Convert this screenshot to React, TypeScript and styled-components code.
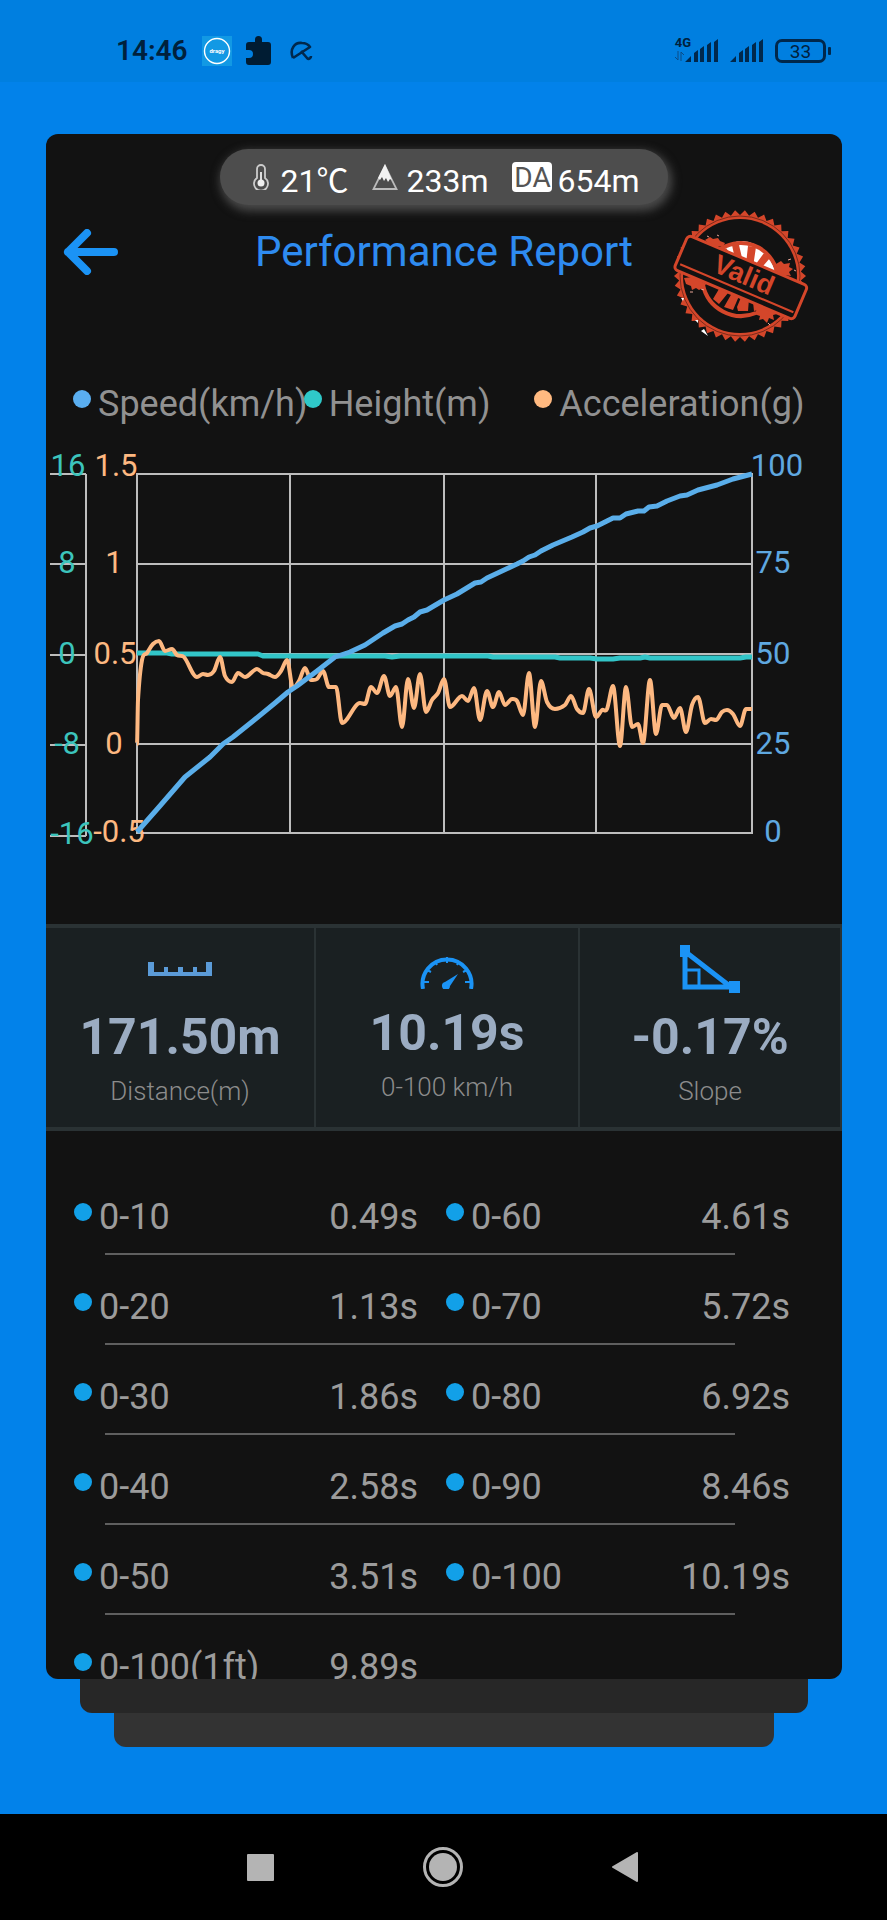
import React from 'react'
import styled, { createGlobalStyle } from 'styled-components'

type Point = [number, number]

const GlobalStyle = createGlobalStyle`
  * {
    box-sizing: border-box;
  }
  body {
    margin: 0;
    background: #0282ea;
    font-family: Roboto, 'Noto Sans CJK SC', sans-serif;
  }
`

const legend = [
  { label: 'Speed(km/h)', color: '#5aaef0' },
  { label: 'Height(m)', color: '#2fc8c8' },
  { label: 'Acceleration(g)', color: '#ffb980' },
]

const splits = [
  ['0-10', '0.49s', '0-60', '4.61s'],
  ['0-20', '1.13s', '0-70', '5.72s'],
  ['0-30', '1.86s', '0-80', '6.92s'],
  ['0-40', '2.58s', '0-90', '8.46s'],
  ['0-50', '3.51s', '0-100', '10.19s'],
  ['0-100(1ft)', '9.89s'],
]

const speed: Point[] = [
  [137, 832], [159, 807], [185, 777], [210, 757], [223, 744], [233, 737], [253, 721], [275, 703],
  [288, 692], [297, 686], [317, 671], [335, 657], [350, 652], [365, 645], [383, 633], [395, 626],
  [402, 624], [408, 620], [414, 617], [420, 612], [427, 610], [444, 600], [457, 594], [475, 583],
  [481, 582], [487, 578], [517, 564], [523, 561], [529, 557], [535, 555], [541, 551], [553, 545],
  [572, 537], [583, 532], [590, 528], [597, 526], [607, 521], [613, 518], [620, 518], [626, 514],
  [638, 511], [644, 511], [649, 507], [657, 506], [667, 501], [680, 496], [687, 495], [698, 490],
  [717, 485], [733, 479], [752, 474],
]

const height: Point[] = [
  [137, 653], [167, 653], [172, 654], [258, 654], [263, 656], [385, 656], [392, 657], [400, 656],
  [488, 656], [493, 657], [555, 657], [560, 658], [590, 658], [597, 659], [613, 659], [620, 658],
  [640, 658], [645, 657], [650, 658], [740, 658], [746, 657], [752, 657],
]

const acceleration: Point[] = [
  [137, 744], [138, 700], [142, 660], [147, 653], [153, 644], [159, 641], [165, 651], [172, 649],
  [177, 655], [184, 657], [197, 677], [203, 674], [208, 675], [214, 671], [220, 657], [225, 676],
  [232, 682], [238, 673], [245, 677], [257, 669], [263, 673], [268, 674], [275, 677], [281, 671],
  [287, 660], [293, 688], [299, 681], [305, 668], [311, 680], [317, 679], [323, 671], [329, 687],
  [336, 687], [342, 723], [360, 703], [365, 704], [371, 687], [377, 693], [384, 676], [390, 696],
  [396, 687], [402, 727], [408, 679], [414, 708], [420, 674], [426, 712], [432, 700], [438, 693],
  [444, 679], [450, 707], [462, 696], [468, 701], [474, 688], [480, 720], [487, 691], [493, 707],
  [499, 692], [505, 705], [512, 699], [517, 701], [523, 715], [529, 673], [535, 727], [541, 681],
  [547, 702], [555, 709], [565, 705], [571, 696], [577, 709], [583, 713], [589, 689], [596, 717],
  [602, 710], [607, 709], [613, 686], [620, 746], [626, 687], [632, 727], [638, 724], [643, 743],
  [650, 680], [656, 734], [662, 705], [667, 705], [674, 718], [680, 708], [686, 732], [692, 705],
  [698, 697], [705, 723], [711, 719], [716, 720], [722, 712], [727, 710], [733, 714], [740, 726],
  [746, 709], [752, 709],
]

const toLine = (points: Point[]) => points.map((p) => p.join(',')).join(' ')

// flat at every peak and dip, so the curve never overshoots a sample
const toCurve = (points: Point[]) => {
  const slope = points.map(([x, y], i) => {
    const prev = points[i - 1]
    const next = points[i + 1]
    if (!prev || !next || (y - prev[1]) * (next[1] - y) <= 0) return 0
    return (next[1] - prev[1]) / (next[0] - prev[0])
  })
  return points.reduce((path, [x, y], i) => {
    if (i === 0) return `M${x},${y}`
    const [px, py] = points[i - 1]
    const d = (x - px) / 3
    return `${path}C${px + d},${py + slope[i - 1] * d} ${x - d},${y - slope[i] * d} ${x},${y}`
  }, '')
}

const rows = [474, 564, 654, 744, 833]
const ticks = [474, 564, 655, 745, 836]
const columns = [137, 290, 444, 596, 752]

const Chart: React.FC = () => (
  <StyledChart viewBox="46 440 796 420" role="img" aria-label="Speed, height and acceleration">
    <g stroke="#bdbdbd" strokeWidth="2" fill="none">
      {rows.map((y) => <line key={y} x1="136" x2="753" y1={y} y2={y} />)}
      {columns.map((x) => <line key={x} x1={x} x2={x} y1="474" y2="833" />)}
      <line x1="86" x2="86" y1="474" y2="836" />
      {ticks.map((y) => <line key={y} x1="50" x2="86" y1={y} y2={y} />)}
    </g>
    <g fill="#3cc4bc">
      <text x="68" y="476">16</text>
      <text x="67" y="573">8</text>
      <text x="67" y="664">0</text>
      <text x="67" y="754">-8</text>
      <text x="72" y="844">-16</text>
    </g>
    <g fill="#fdb881">
      <text x="116" y="476">1.5</text>
      <text x="114" y="573">1</text>
      <text x="115" y="664">0.5</text>
      <text x="114" y="754">0</text>
      <text x="119" y="842">-0.5</text>
    </g>
    <g fill="#5fa8e0">
      <text x="777" y="476">100</text>
      <text x="773" y="573">75</text>
      <text x="773" y="664">50</text>
      <text x="773" y="754">25</text>
      <text x="773" y="842">0</text>
    </g>
    <g fill="none" strokeLinejoin="round">
      <polyline points={toLine(height)} stroke="#32c5c8" strokeWidth="5" />
      <path d={toCurve(acceleration)} stroke="#fdb881" strokeWidth="4" />
      <polyline points={toLine(speed)} stroke="#5aaeea" strokeWidth="5" />
    </g>
  </StyledChart>
)

const teeth = Array.from({ length: 84 }, (_, i) => {
  const a = (i * Math.PI) / 42
  const r = i % 2 ? 61 : 66
  return `${(67 + r * Math.cos(a)).toFixed(1)},${(66 + r * Math.sin(a)).toFixed(1)}`
}).join(' ')

const Stamp: React.FC = () => (
  <StyledStamp viewBox="0 0 136 134" role="img" aria-label="Valid">
    <polygon points={teeth} fill="#d4462a" />
    <circle cx="67" cy="66" r="60" fill="none" stroke="#7c2a1b" strokeWidth="1" />
    <circle cx="67" cy="66" r="57" fill="#121212" />
    <path d="M28 121l7 5-4-7zM22 110l3 3 0-3zM8 88l2 3 1-3z" fill="#fff" />
    {/* dome above the ribbon */}
    <path d="M48 40Q58 31 70 31Q92 33 102 60L102 66L48 46z" fill="#fff" />
    <path d="M45 41A37 37 0 0 1 104 62" fill="none" stroke="#d4462a" strokeWidth="4" />
    <path d="M59 35l7 0 4 17-8-3zM75 36l8 1-3 20-7-3zM91 43l6 5-12 14-5-4zM48 42l5-4 6 8-4 1z" fill="#d4462a" />
    {/* lower arc with its rays */}
    <path d="M30 75A39 39 0 0 0 83 103" fill="none" stroke="#d4462a" strokeWidth="4" />
    <path d="M46 79l9 4-9 11-6-5zM59 83l7 3-6 14-9-3zM69 85l7 4-1 12-10 0-1-4zM80 92l6 2 3 5-8 2z" fill="#d4462a" />
    {/* ink splatter */}
    <path d="M32 30l5-3 3 2 5-1 2 3 5 2-2 4-6-1-3 2zM103 54l5-3 3 3 6-1-1 4 4 2-4 3 2 4-6-1-4 1-5-6zM11 68l8-1 14 7-3 4-4 2-3-2-4 2-1-4-5-2zM86 96l14 4 4 4-4 1 1 5-5-2-2 5-4-4-4 1 1-4-6-2z" fill="#d4462a" />
    <path d="M34 26l2 1M44 25l2 1M115 50l3-1M121 60l2 1M17 82l3 0M95 113l2 2M28 79l3 1M26 70l2 1" stroke="#e8a596" strokeWidth="1" />
    <g transform="rotate(23 68 67)">
      <rect x="3" y="49" width="130" height="37" rx="4" fill="#121212" stroke="#d4462a" strokeWidth="3" />
      <path d="M7 79H130" stroke="#d4462a" strokeWidth="2" />
      <text x="70" y="73" textAnchor="middle">Valid</text>
    </g>
  </StyledStamp>
)

const Signal: React.FC = () => (
  <svg width="33" height="24" viewBox="0 0 33 24" fill="#00284c" aria-hidden="true">
    <path d="M0 23l6-6v6zM9 14l4-3v12H9zM15 10l4-3v16h-4zM22 6l4-3v20h-4zM29 3l4-3v23h-4z" />
  </svg>
)

const StatusBar: React.FC = () => (
  <StyledStatusBar>
    <StatusGroup $gap={14}>
      <Clock>14:46</Clock>
      <svg width="30" height="30" viewBox="0 0 30 30">
        <rect width="30" height="30" fill="#1299e4" />
        <circle cx="15" cy="15" r="12.5" fill="none" stroke="#fff" strokeWidth="1.4" />
        <text x="15" y="17" textAnchor="middle" fontSize="6" fontWeight="700" fill="#fff">dragy</text>
      </svg>
      <svg width="25" height="30" viewBox="0 0 25 30" fill="#001c33">
        <path d="M3 6h6V3.500a3.500 3.500 0 0 1 7 0V6h6q3 0 3 3v17q0 3-3 3H3q-3 0-3-3v-4h3a4 4 0 0 0 0-8H0V9q0-3 3-3z" />
      </svg>
      <svg width="28" height="20" viewBox="-5 0 28 20" fill="none" stroke="#00284c" strokeWidth="2.600">
        <path d="M3 17C-1 8 5 1 12 2c3 0 6 1 8 4L3 17M11 10l6 7c2 2 4 0 4-2" strokeLinejoin="round" />
      </svg>
    </StatusGroup>
    <StatusGroup $gap={12}>
      <Network>
        4G
        <svg width="9" height="10" viewBox="0 0 9 10" fill="none" stroke="#0a4c86">
          <path d="M3 0v9L0 6M6 10V1l3 3" />
        </svg>
      </Network>
      <Signal />
      <Signal />
      <Battery>33</Battery>
    </StatusGroup>
  </StyledStatusBar>
)

const App: React.FC = () => {
  return (
    <Screen>
      <GlobalStyle />
      <StatusBar />
      <Deck>
        <Card>
          <Conditions>
            <Condition $gap={11}>
              <svg width="16" height="26" viewBox="0 0 16 26" fill="none" stroke="#ccc" strokeWidth="1.800">
                <path d="M4 14V5a4 4 0 0 1 8 0v9a7 7 0 1 1-8 0z" />
                <circle cx="8" cy="19" r="3.500" fill="#eee" stroke="none" />
                <path d="M8 8v10" stroke="#eee" />
              </svg>
              21℃
            </Condition>
            <Condition $gap={8}>
              <svg width="26" height="26" viewBox="0 0 26 26">
                <path d="M13 2L1.500 25h23z" fill="none" stroke="#bbb" strokeWidth="1.800" />
                <path d="M13 0L6 14l2 2 2-3 2 4 2-3 2 4 2-3 2 1z" fill="#f2f2f2" />
              </svg>
              233m
            </Condition>
            <Condition $gap={5}>
              <AltitudeTag>DA</AltitudeTag>
              654m
            </Condition>
          </Conditions>
          <Header>
            <BackButton type="button" aria-label="Back">
              <svg width="56" height="46" viewBox="0 0 56 46" fill="none" stroke="#1b93f5" strokeWidth="8" strokeLinecap="round" strokeLinejoin="round">
                <path d="M51 23H5M24 4L5 23l19 19" />
              </svg>
            </BackButton>
            <Title>Performance Report</Title>
            <Stamp />
          </Header>
          <Legend>
            {legend.map(({ label, color }) => (
              <LegendItem key={label}>
                <Dot $color={color} />
                {label}
              </LegendItem>
            ))}
          </Legend>
          <Chart />
          <Stats>
            <Stat>
              <svg width="64" height="48" viewBox="0 0 64 48" fill="#5b9bd8">
                <path d="M0 17h6v10h10v-5h4v5h10v-5h5v5h10v-5h4v5h9V17h6v14H0z" />
              </svg>
              <StatValue>171.50m</StatValue>
              <StatLabel>Distance(m)</StatLabel>
            </Stat>
            <Stat>
              <svg width="54" height="40" viewBox="0 0 54 40" fill="none" stroke="#1b93f5">
                <path d="M3 40A24.500 24.500 0 1 1 51 40" strokeWidth="4" />
                <path d="M27 8v6M15 12l2 4M39 12l-2 4M7 21l4 2M47 21l-4 2M4 33h5M50 33h-5" strokeWidth="2" />
                <path d="M38 25L30 37a4 4 0 1 1-5-4z" fill="#1b93f5" stroke="none" />
              </svg>
              <StatValue>10.19s</StatValue>
              <StatLabel>0-100 km/h</StatLabel>
            </Stat>
            <Stat>
              <svg width="60" height="48" viewBox="0 0 60 48" fill="none" stroke="#1b93f5">
                <path d="M5 8v34h46L7 8" strokeWidth="5" />
                <path d="M7 25h12v15" strokeWidth="3" />
                <path d="M0 0h10v12H0zM49 36h11v12H49z" fill="#1b93f5" stroke="none" />
              </svg>
              <StatValue>-0.17%</StatValue>
              <StatLabel>Slope</StatLabel>
            </Stat>
          </Stats>
          <Splits>
            <tbody>
              {splits.map((cells) => (
                <SplitRow key={cells[0]}>
                  {cells.map((cell, i) =>
                    i % 2 ? (
                      <SplitTime key={i}>{cell}</SplitTime>
                    ) : (
                      <SplitRange key={i} scope="row">
                        <Dot $color="#12a0e8" />
                        {cell}
                      </SplitRange>
                    )
                  )}
                </SplitRow>
              ))}
            </tbody>
          </Splits>
        </Card>
        <Underlay $color="#272727" />
        <Underlay $color="#333333" $deep />
      </Deck>
      <NavBar>
        <NavButton type="button" aria-label="Recent apps">
          <svg width="27" height="27" viewBox="0 0 27 27" fill="#b4b4b4"><rect width="27" height="27" rx="1" /></svg>
        </NavButton>
        <NavButton type="button" aria-label="Home">
          <svg width="42" height="42" viewBox="0 0 42 42" fill="#b4b4b4">
            <circle cx="21" cy="21" r="14" />
            <circle cx="21" cy="21" r="18.500" fill="none" stroke="#b4b4b4" strokeWidth="3" />
          </svg>
        </NavButton>
        <NavButton type="button" aria-label="Go back">
          <svg width="28" height="30" viewBox="0 0 28 30" fill="#b4b4b4" stroke="#b4b4b4" strokeWidth="2" strokeLinejoin="round">
            <path d="M26 1v28L2 15z" />
          </svg>
        </NavButton>
      </NavBar>
    </Screen>
  )
}

const Screen = styled.div`
  display: flex;
  flex-direction: column;
  height: 100vh;
  background: #0282ea;
`

const StyledStatusBar = styled.div`
  display: flex;
  align-items: center;
  justify-content: space-between;
  height: 82px;
  flex-shrink: 0;
  padding: 20px 56px 0 116px;
  background: #007fe0;
  color: #00213d;
`

const StatusGroup = styled.div<{ $gap: number }>`
  display: flex;
  align-items: center;
  gap: ${props => props.$gap}px;
`

const Clock = styled.span`
  font-size: 28px;
  font-weight: 600;
  line-height: 32px;
`

const Network = styled.span`
  display: flex;
  flex-direction: column;
  height: 32px;
  margin-right: -18px;
  font-size: 13px;
  font-weight: 700;
  line-height: 16px;
`

const Battery = styled.span`
  position: relative;
  width: 51px;
  height: 24px;
  margin-right: 5px;
  border: 3px solid #00284c;
  border-radius: 7px;
  font-size: 19px;
  line-height: 20px;
  text-align: center;
  &::after {
    content: '';
    position: absolute;
    top: 5px;
    right: -8px;
    width: 3px;
    height: 8px;
    border-radius: 1px;
    background: #00284c;
  }
`

const Deck = styled.main`
  display: flex;
  flex: 1;
  flex-direction: column;
  min-height: 0;
  padding: 52px 45px 67px 46px;
`

const Card = styled.section`
  display: flex;
  flex: 1;
  flex-direction: column;
  min-height: 0;
  padding-top: 15px;
  overflow: hidden;
  border-radius: 12px;
  background: #121212;
`

const Underlay = styled.div<{ $color: string, $deep?: boolean }>`
  flex-shrink: 0;
  height: 34px;
  margin: 0 ${props => props.$deep ? 68 : 34}px;
  border-radius: 0 0 12px 12px;
  background: ${props => props.$color};
`

const Conditions = styled.div`
  display: flex;
  align-self: center;
  flex-shrink: 0;
  gap: 24px;
  height: 56px;
  padding: 8px 28px 0 33px;
  border-radius: 28px;
  background: #4d4d4d;
  box-shadow: 2px 4px 10px 2px #4a4a4a;
`

const Condition = styled.span<{ $gap: number }>`
  display: flex;
  align-items: center;
  gap: ${props => props.$gap}px;
  color: #fff;
  font-size: 32px;
  line-height: 48px;
  white-space: nowrap;
  & > * {
    margin-bottom: 8px;
  }
`

const AltitudeTag = styled.span`
  width: 40px;
  height: 30px;
  border-radius: 4px;
  background: #fff;
  color: #555;
  font-size: 28px;
  line-height: 32px;
  text-align: center;
`

const Header = styled.header`
  display: grid;
  grid-template-columns: 1fr auto 1fr;
  align-items: start;
  flex-shrink: 0;
  margin-top: 5px;
`

const BackButton = styled.button`
  display: flex;
  align-items: center;
  justify-self: start;
  height: 84px;
  padding: 0 17px;
  border: 0;
  background: none;
`

const Title = styled.h1`
  margin: 0;
  color: #2e8bf0;
  font-size: 42px;
  font-weight: 400;
  line-height: 84px;
`

const StyledStamp = styled.svg`
  justify-self: end;
  width: 136px;
  height: 134px;
  margin-right: 33px;
  text {
    fill: #d4462a;
    font-family: 'Liberation Sans', sans-serif;
    font-size: 27px;
    font-weight: 700;
  }
`

const Legend = styled.div`
  display: grid;
  grid-template-columns: repeat(3, minmax(0, 1fr));
  flex-shrink: 0;
  margin-top: 38px;
  padding: 0 77px 0 27px;
`

const LegendItem = styled.span`
  display: flex;
  align-items: center;
  color: #919191;
  font-size: 36px;
  line-height: 44px;
  white-space: nowrap;
`

const Dot = styled.i<{ $color: string }>`
  flex-shrink: 0;
  width: 18px;
  height: 18px;
  margin: 0 7px 10px 0;
  border-radius: 50%;
  background: ${props => props.$color};
`

const StyledChart = styled.svg`
  display: block;
  flex-shrink: 0;
  width: 100%;
  margin-top: 14px;
  font-size: 31px;
  text-anchor: middle;
`

const Stats = styled.div`
  display: grid;
  grid-template-columns: 270fr 264fr 262fr;
  flex-shrink: 0;
  height: 207px;
  margin-top: 64px;
  border: solid #2a3234;
  border-width: 4px 0;
  background: #1a2022;
`

const Stat = styled.div`
  display: flex;
  flex-direction: column;
  align-items: center;
  justify-content: center;
  padding-bottom: 3px;
  border-right: 2px solid #2a3234;
`

const StatValue = styled.strong`
  margin: 14px 0 8px;
  color: #9bacc2;
  font-size: 50px;
  font-weight: 700;
  line-height: 60px;
`

const StatLabel = styled.span`
  color: #8c8c8c;
  font-size: 26px;
  font-weight: 300;
  line-height: 32px;
`

const Splits = styled.table`
  display: block;
  margin-top: 34px;
  color: #9c9c9c;
  font-size: 36px;
  line-height: 72px;
  tbody {
    display: block;
  }
`

const SplitRow = styled.tr`
  display: grid;
  grid-template-columns: repeat(2, 3fr 2fr);
  padding: 16px 52px 0 0;
  &:not(:last-child)::after {
    content: '';
    grid-column: 1 / -1;
    height: 2px;
    margin: 0 55px 0 59px;
    background: #5f5f5f;
  }
`

const SplitRange = styled.th`
  display: flex;
  align-items: center;
  padding: 0 0 0 28px;
  font-weight: 400;
  white-space: nowrap;
`

const SplitTime = styled.td`
  padding: 0;
  text-align: right;
`

const NavBar = styled.nav`
  display: flex;
  align-items: center;
  justify-content: center;
  flex-shrink: 0;
  gap: 119px;
  height: 106px;
  padding-right: 2px;
  background: #000;
`

const NavButton = styled.button`
  display: flex;
  align-items: center;
  justify-content: center;
  width: 63px;
  height: 63px;
  padding: 0;
  border: 0;
  background: none;
`

export default App
